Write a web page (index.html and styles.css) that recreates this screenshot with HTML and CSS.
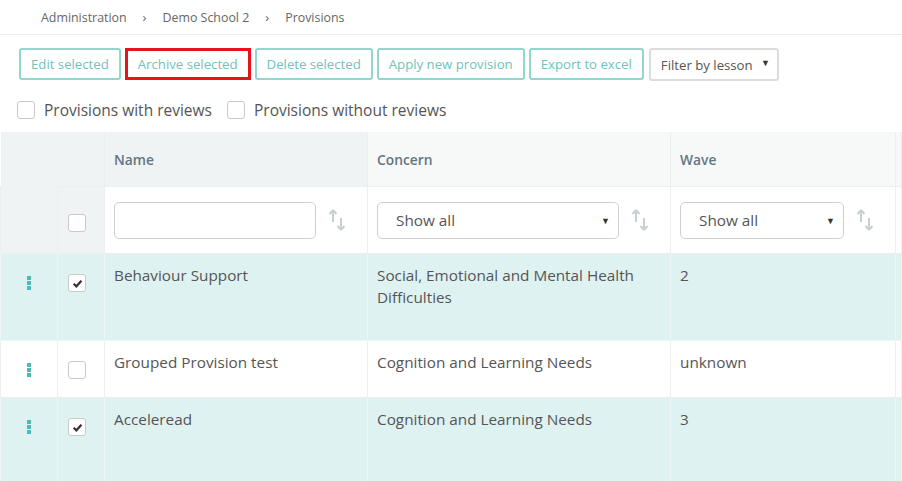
FILE: index.html
```html
<!doctype html>
<html lang="en">
<head>
    <meta charset="utf-8">
    <title>Provisions</title>
    <link rel="stylesheet" href="styles.css">
</head>
<body>

    <div class="crumbs">
        <span>Administration</span>
        <span class="sep">›</span>
        <span>Demo School 2</span>
        <span class="sep">›</span>
        <span>Provisions</span>
    </div>

    <div class="toolbar">
        <button class="btn">Edit selected</button>
        <button class="btn btn-marked">Archive selected</button>
        <button class="btn">Delete selected</button>
        <button class="btn">Apply new provision</button>
        <button class="btn">Export to excel</button>
        <div class="lesson">Filter by lesson <span class="caret">▼</span></div>
    </div>

    <div class="toggles">
        <label class="toggle"><span class="box"></span>Provisions with reviews</label>
        <label class="toggle"><span class="box"></span>Provisions without reviews</label>
    </div>

    <table class="grid">
        <colgroup>
            <col style="width:57px">
            <col style="width:47px">
            <col style="width:263px">
            <col style="width:303px">
            <col style="width:225px">
            <col>
        </colgroup>
        <thead>
            <tr class="head">
                <th class="dark" colspan="2"></th>
                <th class="dark">Name</th>
                <th>Concern</th>
                <th>Wave</th>
                <th></th>
            </tr>
            <tr class="filters">
                <td class="dark"></td>
                <td class="dark check"><span class="box"></span></td>
                <td>
                    <div class="filter">
                        <div class="field"></div>
                        <svg class="sort" viewBox="0 0 18 22"><path d="M5 1 L1.5 5 M5 1 L8.5 5 M5 1 V13" /><path d="M13 21 L9.5 17 M13 21 L16.5 17 M13 21 V9" /></svg>
                    </div>
                </td>
                <td>
                    <div class="filter">
                        <div class="field pick">Show all <span class="caret">▼</span></div>
                        <svg class="sort" viewBox="0 0 18 22"><path d="M5 1 L1.5 5 M5 1 L8.5 5 M5 1 V13" /><path d="M13 21 L9.5 17 M13 21 L16.5 17 M13 21 V9" /></svg>
                    </div>
                </td>
                <td>
                    <div class="filter">
                        <div class="field pick">Show all <span class="caret">▼</span></div>
                        <svg class="sort" viewBox="0 0 18 22"><path d="M5 1 L1.5 5 M5 1 L8.5 5 M5 1 V13" /><path d="M13 21 L9.5 17 M13 21 L16.5 17 M13 21 V9" /></svg>
                    </div>
                </td>
                <td></td>
            </tr>
        </thead>
        <tbody>
            <tr class="picked">
                <td class="menu"><span class="dots"><i></i><i></i><i></i></span></td>
                <td class="check"><span class="box"><svg class="tick" viewBox="0 0 10 10"><path d="M1.5 5.2 L4 7.6 L8.6 2.6" /></svg></span></td>
                <td>Behaviour Support</td>
                <td>Social, Emotional and Mental Health Difficulties</td>
                <td>2</td>
                <td></td>
            </tr>
            <tr class="short">
                <td class="menu"><span class="dots"><i></i><i></i><i></i></span></td>
                <td class="check"><span class="box"></span></td>
                <td>Grouped Provision test</td>
                <td>Cognition and Learning Needs</td>
                <td>unknown</td>
                <td></td>
            </tr>
            <tr class="picked">
                <td class="menu"><span class="dots"><i></i><i></i><i></i></span></td>
                <td class="check"><span class="box"><svg class="tick" viewBox="0 0 10 10"><path d="M1.5 5.2 L4 7.6 L8.6 2.6" /></svg></span></td>
                <td>Acceleread</td>
                <td>Cognition and Learning Needs</td>
                <td>3</td>
                <td></td>
            </tr>
        </tbody>
    </table>

</body>
</html>
```

FILE: styles.css
```css
html {
    width: 100%;
    height: 100%;
}

body {
    margin: 0;
    font-family: 'Open Sans', sans-serif;
    color: #555;
    background-color: #fff;
    overflow: hidden;
}

.crumbs {
    height: 35px;
    padding-left: 41px;
    display: flex;
    align-items: center;
    gap: 14px;
    font-size: 12.4px;
    color: #666;
    border-bottom: 1px solid #eceeef;
    box-sizing: border-box;
}

.crumbs .sep {
    font-size: 13px;
    padding: 0 2px;
}

.toolbar {
    display: flex;
    align-items: flex-start;
    gap: 4px;
    padding: 13px 0 0 19px;
}

.btn {
    height: 32px;
    padding: 0 10px;
    font-family: 'Open Sans', sans-serif;
    font-size: 13.2px;
    color: #6cc5bd;
    background-color: #fff;
    border: 2px solid #92d6cf;
    border-radius: 3px;
}

.btn-marked {
    border: 3px solid #e8131a;
    border-radius: 0;
    padding: 0 10px;
}

.lesson {
    height: 33px;
    width: 130px;
    box-sizing: border-box;
    margin-left: 1px;
    padding: 0 0 0 10px;
    display: flex;
    align-items: center;
    font-size: 13.2px;
    color: #555;
    border: 2px solid #dcdcdc;
    border-radius: 3px;
    position: relative;
}

.lesson .caret {
    position: absolute;
    right: 7px;
    top: 6px;
    font-size: 9px;
    color: #333;
}

.toggles {
    display: flex;
    gap: 15px;
    padding: 19px 0 0 17px;
    height: 33px;
    box-sizing: border-box;
}

.toggle {
    display: flex;
    align-items: center;
    gap: 9px;
    font-size: 15.5px;
    color: #555;
    height: 20px;
}

.box {
    display: inline-flex;
    align-items: center;
    justify-content: center;
    width: 18px;
    height: 18px;
    box-sizing: border-box;
    border: 1px solid #c9c9c9;
    border-radius: 3px;
    background-color: #fff;
    vertical-align: top;
}

.tick {
    width: 11px;
    height: 11px;
    fill: none;
    stroke: #333;
    stroke-width: 2;
}

.grid {
    margin-top: 18px;
    width: 100%;
    table-layout: fixed;
    border-collapse: collapse;
    font-size: 15.3px;
}

.grid th {
    height: 54px;
    padding: 0 9px;
    text-align: left;
    font-size: 13.8px;
    font-weight: 600;
    color: #627683;
    background-color: #f7f9f9;
    border-right: 1px solid #eceff0;
}

.grid th.dark,
.grid td.dark {
    background-color: #f0f3f4;
}

.filters td {
    height: 66px;
    padding: 0 21px 0 9px;
    border: 1px solid #eceff0;
}

.filters td.dark:first-child {
    border-top-color: #f0f3f4;
}

.filters .box {
    margin-top: 6px;
}

.filter {
    display: flex;
    align-items: center;
    gap: 12px;
}

.field {
    flex: 1;
    height: 37px;
    box-sizing: border-box;
    border: 1px solid #cfcfcf;
    border-radius: 5px;
    background-color: #fff;
}

.pick {
    display: flex;
    align-items: center;
    padding: 0 0 0 18px;
    font-size: 15.3px;
    color: #555;
    position: relative;
}

.pick .caret {
    position: absolute;
    right: 8px;
    top: 11px;
    font-size: 9px;
    color: #333;
}

.sort {
    width: 18px;
    height: 22px;
    fill: none;
    stroke: #c6d0d5;
    stroke-width: 2;
}

.grid td.check {
    padding-left: 10px;
    padding-right: 0;
    text-align: left;
}

.grid tbody td {
    height: 87px;
    padding: 10px 9px 0;
    vertical-align: top;
    line-height: 22px;
    color: #555;
    border: 1px solid #eceff0;
    box-sizing: border-box;
}

.grid tbody tr.short td {
    height: 57px;
}

.grid tbody tr.picked td {
    background-color: #dff2f2;
    border-color: #edf6f6;
}

.grid tbody td.menu {
    padding-top: 22px;
    text-align: center;
}

.grid tbody td.check {
    padding-top: 20px;
}

.dots {
    display: inline-flex;
    flex-direction: column;
    gap: 1px;
    vertical-align: top;
}

.dots i {
    display: block;
    width: 4px;
    height: 4px;
    background-color: #49bdb5;
}
```
